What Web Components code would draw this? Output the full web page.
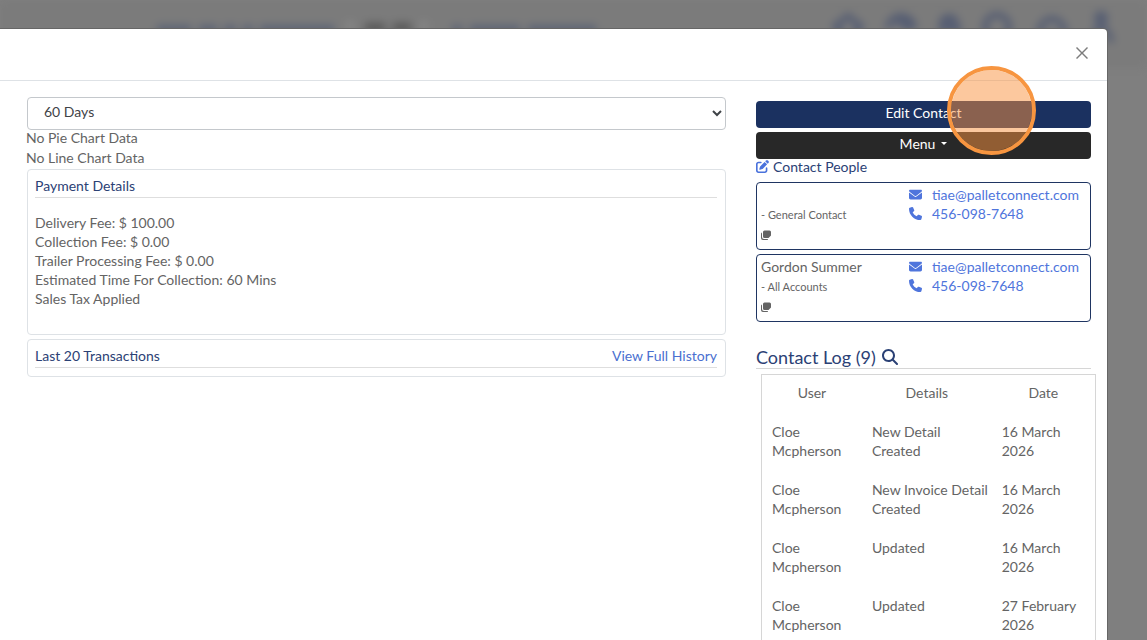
<!DOCTYPE html>
<html lang="en">
<head>
<meta charset="utf-8">
<title>Contact</title>
<style>
  html, body { height: 100%; }
  body {
    margin: 0;
    overflow: hidden;
    color: #646464;
    font: 14px/19px Lato, sans-serif;
  }
</style>
</head>
<body>
<app-page></app-page>

<script>
const icons = {
  edit: ["0 0 512 512", "M471.6 21.7c-21.900-21.900-57.300-21.900-79.200 0L362.300 51.700l97.900 97.900 30.100-30.100c21.900-21.900 21.900-57.300 0-79.200L471.600 21.700zm-299.200 220c-6.100 6.100-10.800 13.600-13.500 21.900l-29.600 88.800c-2.900 8.600-.6 18.100 5.800 24.600s15.900 8.700 24.600 5.800l88.800-29.600c8.200-2.700 15.700-7.400 21.900-13.500L437.700 172.300 339.700 74.300 172.400 241.700zM96 64C43 64 0 107 0 160V416c0 53 43 96 96 96H352c53 0 96-43 96-96V320c0-17.700-14.300-32-32-32s-32 14.300-32 32v96c0 17.700-14.300 32-32 32H96c-17.700 0-32-14.300-32-32V160c0-17.700 14.300-32 32-32h96c17.700 0 32-14.300 32-32s-14.300-32-32-32H96z"],
  mail: ["0 0 512 512", "M48 64C21.500 64 0 85.500 0 112c0 15.100 7.100 29.300 19.200 38.400L236.800 313.600c11.400 8.500 27 8.500 38.400 0L492.800 150.400c12.100-9.100 19.200-23.300 19.200-38.400c0-26.500-21.500-48-48-48H48zM0 176V384c0 35.300 28.700 64 64 64H448c35.300 0 64-28.700 64-64V176L294.400 339.200c-22.800 17.100-54 17.100-76.800 0L0 176z"],
  phone: ["0 0 512 512", "M164.900 24.600c-7.700-18.600-28-28.500-47.400-23.200l-88 24C12.100 30.200 0 46 0 64C0 311.400 200.600 512 448 512c18 0 33.800-12.100 38.600-29.500l24-88c5.300-19.400-4.600-39.700-23.200-47.400l-96-40c-16.300-6.800-35.200-2.100-46.300 11.600L304.700 368C234.300 334.700 177.300 277.700 144 207.300L193.300 167c13.700-11.200 18.400-30 11.600-46.300l-40-96z"],
  search: ["0 0 512 512", "M416 208c0 45.900-14.900 88.300-40 122.700L502.600 457.400c12.500 12.500 12.500 32.800 0 45.300s-32.800 12.500-45.300 0L330.700 376c-34.400 25.200-76.800 40-122.700 40C93.100 416 0 322.900 0 208S93.100 0 208 0S416 93.100 416 208zM208 352a144 144 0 1 0 0-288 144 144 0 1 0 0 288z"],
  note: ["0 0 20 20", "M7 1h10a3 3 0 0 1 3 3v7l-5 5H7a3 3 0 0 1-3-3V4a3 3 0 0 1 3-3zM2 5v9a4 4 0 0 0 4 4h8v1a2 2 0 0 1-2 1H4a4 4 0 0 1-4-4V8a3 3 0 0 1 2-3z"],
  close: ["0 0 12 12", "M1 0l5 5 5-5 1 1-5 5 5 5-1 1-5-5-5 5-1-1 5-5-5-5z"]
};

class AppIcon extends HTMLElement {
  constructor() {
    super();
    this.attachShadow({ mode: "open" });
    const [box, path] = icons[this.getAttribute("name")];
    this.shadowRoot.innerHTML = `
      <style>
        :host { display: inline-flex; flex: none; width: 13px; height: 13px; }
        svg { width: 100%; height: 100%; fill: currentColor; }
      </style>
      <svg viewBox="${box}" aria-hidden="true"><path d="${path}"/></svg>
    `;
  }
}

// Page that sits dimmed and out of focus behind the dialog
class AppBackdrop extends HTMLElement {
  constructor() {
    super();
    this.attachShadow({ mode: "open" });
    this.shadowRoot.innerHTML = `
      <style>
        :host { display: block; background: #7f7f7f; overflow: hidden; }
        .bar { display: flex; justify-content: space-between; height: 68px; background: #7b7b7b; filter: blur(4px); }
        svg { flex: none; }
      </style>
      <div class="bar" aria-hidden="true">
        <svg width="620" height="60" fill="none" stroke="#4a5672" stroke-width="10" opacity=".6">
          <path d="M157 30h34M199 30h18M224 30h12M243 30h10M260 30h74M452 30h10M470 30h50M528 30h68"/>
          <path d="M365 28h20M393 28h18" stroke="#444"/>
          <path d="M346 26h8M420 26h8" stroke="#909090"/>
        </svg>
        <svg width="347" height="60" fill="none" stroke="#4b5571" stroke-width="6" opacity=".8">
          <path d="M33 28l15-12 15 12M39 26v14h18V26"/>
          <path d="M88 29a13 13 0 0 1 26 0M96 23h11v9"/>
          <path d="M142 34V24q0-7 8-7 7 0 8 17M149 20v10h11"/>
          <circle cx="197" cy="27" r="12"/>
          <path d="M239 34a13 15 0 0 1 26 0M243 36h18"/>
          <circle cx="301" cy="18" r="4"/><path d="M293 36q8-18 16 0l3 6"/>
        </svg>
      </div>
    `;
  }
}

class AppButton extends HTMLElement {
  constructor() {
    super();
    this.attachShadow({ mode: "open" });
    this.shadowRoot.innerHTML = `
      <style>
        :host { display: block; }
        button {
          display: flex;
          align-items: center;
          justify-content: center;
          gap: 6px;
          width: 100%;
          padding: 2px 8px 6px;
          border: 0;
          border-radius: 4px;
          color: #fff;
          background: #1b3160;
          font: inherit;
        }
        :host([dark]) button { background: #282828; }
        :host([dark]) button::after {
          content: "";
          border: 3px solid transparent;
          border-top-color: #fff;
          border-bottom: 0;
        }
      </style>
      <button type="button"><slot></slot></button>
    `;
  }
}

class AppCard extends HTMLElement {
  constructor() {
    super();
    this.attachShadow({ mode: "open" });
    this.shadowRoot.innerHTML = `
      <style>
        :host { display: block; padding: 6px 8px 8px 7px; border: 1px solid #dee2e6; border-radius: 4px; }
        header { display: flex; justify-content: space-between; padding-bottom: 2px; border-bottom: 1px solid #dedede; color: #2b4175; }
        h2 { margin: 0; font: inherit; }
      </style>
      <header><h2><slot name="title"></slot></h2><slot name="action"></slot></header>
      <slot></slot>
    `;
  }
}

class ContactPerson extends HTMLElement {
  constructor() {
    super();
    this.attachShadow({ mode: "open" });
    const mail = this.getAttribute("mail");
    const phone = this.getAttribute("phone");
    this.shadowRoot.innerHTML = `
      <style>
        :host {
          display: grid;
          grid-template-columns: 148px 1fr;
          padding: 2px 4px 4px;
          border: 1px solid #1f3562;
          border-radius: 4px;
        }
        p { min-height: 19px; margin: 0; }
        small { font-size: 11px; }
        a { display: flex; align-items: center; gap: 10px; color: #4f75dc; text-decoration: none; }
        .note { display: flex; height: 21px; align-items: center; }
        .note app-icon { width: 10px; height: 10px; }
      </style>
      <div>
        <p><slot></slot></p>
        <p><small>- ${this.getAttribute("role-name")}</small></p>
        <span class="note"><app-icon name="note"></app-icon></span>
      </div>
      <div>
        <a href="mailto:${mail}"><app-icon name="mail"></app-icon>${mail}</a>
        <a href="tel:${phone}"><app-icon name="phone"></app-icon>${phone}</a>
      </div>
    `;
  }
}

class ContactLog extends HTMLElement {
  constructor() {
    super();
    this.attachShadow({ mode: "open" });
    const rows = [
      ["Cloe<br>Mcpherson", "New Detail<br>Created", "16 March<br>2026"],
      ["Cloe<br>Mcpherson", "New Invoice Detail<br>Created", "16 March<br>2026"],
      ["Cloe<br>Mcpherson", "Updated", "16 March<br>2026"],
      ["Cloe<br>Mcpherson", "Updated", "27 February<br>2026"]
    ];
    this.shadowRoot.innerHTML = `
      <style>
        :host { display: block; }
        h2 {
          display: flex;
          align-items: center;
          gap: 6px;
          margin: 0 0 5px;
          border-bottom: 1px solid #d6d6d6;
          color: #2b4175;
          font: inherit;
          font-size: 18px;
          line-height: 22px;
        }
        app-icon { width: 16px; height: 16px; }
        .frame { margin: 0 -5px 0 5px; border: 1px solid #d6d6d6; }
        table { width: 100%; table-layout: fixed; border-collapse: collapse; }
        th, td { padding: 10px; vertical-align: top; font-weight: inherit; }
        th { padding-top: 8px; }
        td { text-align: left; white-space: nowrap; }
        .user { width: 30%; }
        .details { width: 39%; }
      </style>
      <h2>Contact Log (9) <app-icon name="search"></app-icon></h2>
      <div class="frame">
        <table>
          <colgroup><col class="user"><col class="details"><col></colgroup>
          <thead><tr><th>User</th><th>Details</th><th>Date</th></tr></thead>
          <tbody>${rows.map(row => `<tr>${row.map(cell => `<td>${cell}</td>`).join("")}</tr>`).join("")}</tbody>
        </table>
      </div>
    `;
  }
}

class AppModal extends HTMLElement {
  constructor() {
    super();
    this.attachShadow({ mode: "open" });
    this.shadowRoot.innerHTML = `
      <style>
        :host {
          display: block;
          position: relative;
          background: #fff;
          border-radius: 0 4px 0 0;
          box-shadow: 0 0 0 1px #666;
        }
        header { display: flex; justify-content: flex-end; padding: 15px 16px 18px; border-bottom: 1px solid #dee2e6; }
        button { display: flex; padding: 3px; border: 0; background: none; color: #7d7d7d; }
        app-icon { width: 12px; height: 12px; }
        .body { display: grid; grid-template-columns: minmax(0, 2fr) minmax(0, 1fr); padding: 16px 1px 0 11px; }
        .body > div { padding: 0 15px; }
        .pointer {
          position: absolute;
          top: 37px;
          right: 71px;
          box-sizing: border-box;
          width: 89px;
          height: 89px;
          border: 4px solid #f79540;
          border-radius: 50%;
          background: rgba(249, 145, 61, .5);
          background-clip: padding-box;
        }
      </style>
      <header><button type="button" aria-label="Close"><app-icon name="close"></app-icon></button></header>
      <div class="body">
        <div><slot name="main"></slot></div>
        <div><slot name="side"></slot></div>
      </div>
      <div class="pointer"></div>
    `;
  }
}

class AppPage extends HTMLElement {
  constructor() {
    super();
    this.attachShadow({ mode: "open" });
    this.shadowRoot.innerHTML = `
      <style>
        :host { display: grid; height: 100%; grid-template: minmax(0, 1fr) / minmax(0, 1fr); }
        app-backdrop, app-modal { grid-area: 1 / 1; }
        app-modal { margin: 29px 40px 0 0; }
        select {
          width: 100%;
          height: 33px;
          padding: 4px 12px 8px;
          border: 1px solid #c4c8cc;
          border-radius: 4px;
          background: #fff;
          color: #3f4347;
          font: inherit;
        }
        a { color: #4a6fd0; text-decoration: none; }
        ul { margin: 0; padding: 0; list-style: none; }
        .main { display: flex; flex-direction: column; gap: 4px; padding-left: 1px; }
        .charts { margin: -2px 0 1px -1px; line-height: 20px; }
        .main > div { display: flex; flex-direction: column; }
        .fees { padding: 15px 0 18px; }
        .side { display: flex; flex-direction: column; gap: 4px; padding-top: 4px; }
        .people { display: flex; align-items: center; gap: 4px; margin: -6px 0 0; padding-bottom: 2px; color: #2b4175; font: inherit; }
        .people app-icon { color: #4a72dc; }
        contact-log { margin-top: 20px; }
      </style>
      <app-backdrop></app-backdrop>
      <app-modal>
        <div class="main" slot="main">
          <div>
            <select aria-label="Period"><option>60 Days</option></select>
            <p class="charts">No Pie Chart Data<br>No Line Chart Data</p>
            <app-card>
              <span slot="title">Payment Details</span>
              <ul class="fees">
                <li>Delivery Fee: $ 100.00</li>
                <li>Collection Fee: $ 0.00</li>
                <li>Trailer Processing Fee: $ 0.00</li>
                <li>Estimated Time For Collection: 60 Mins</li>
                <li>Sales Tax Applied</li>
              </ul>
            </app-card>
          </div>
          <app-card>
            <span slot="title">Last 20 Transactions</span>
            <a slot="action" href="#history">View Full History</a>
          </app-card>
        </div>
        <div class="side" slot="side">
          <app-button>Edit Contact</app-button>
          <app-button dark>Menu</app-button>
          <h2 class="people"><app-icon name="edit"></app-icon>Contact People</h2>
          <contact-person mail="tiae@palletconnect.com" phone="456-098-7648" role-name="General Contact"></contact-person>
          <contact-person mail="tiae@palletconnect.com" phone="456-098-7648" role-name="All Accounts">Gordon Summer</contact-person>
          <contact-log></contact-log>
        </div>
      </app-modal>
    `;
  }
}

customElements.define("app-icon", AppIcon);
customElements.define("app-backdrop", AppBackdrop);
customElements.define("app-button", AppButton);
customElements.define("app-card", AppCard);
customElements.define("contact-person", ContactPerson);
customElements.define("contact-log", ContactLog);
customElements.define("app-modal", AppModal);
customElements.define("app-page", AppPage);
</script>
</body>
</html>
